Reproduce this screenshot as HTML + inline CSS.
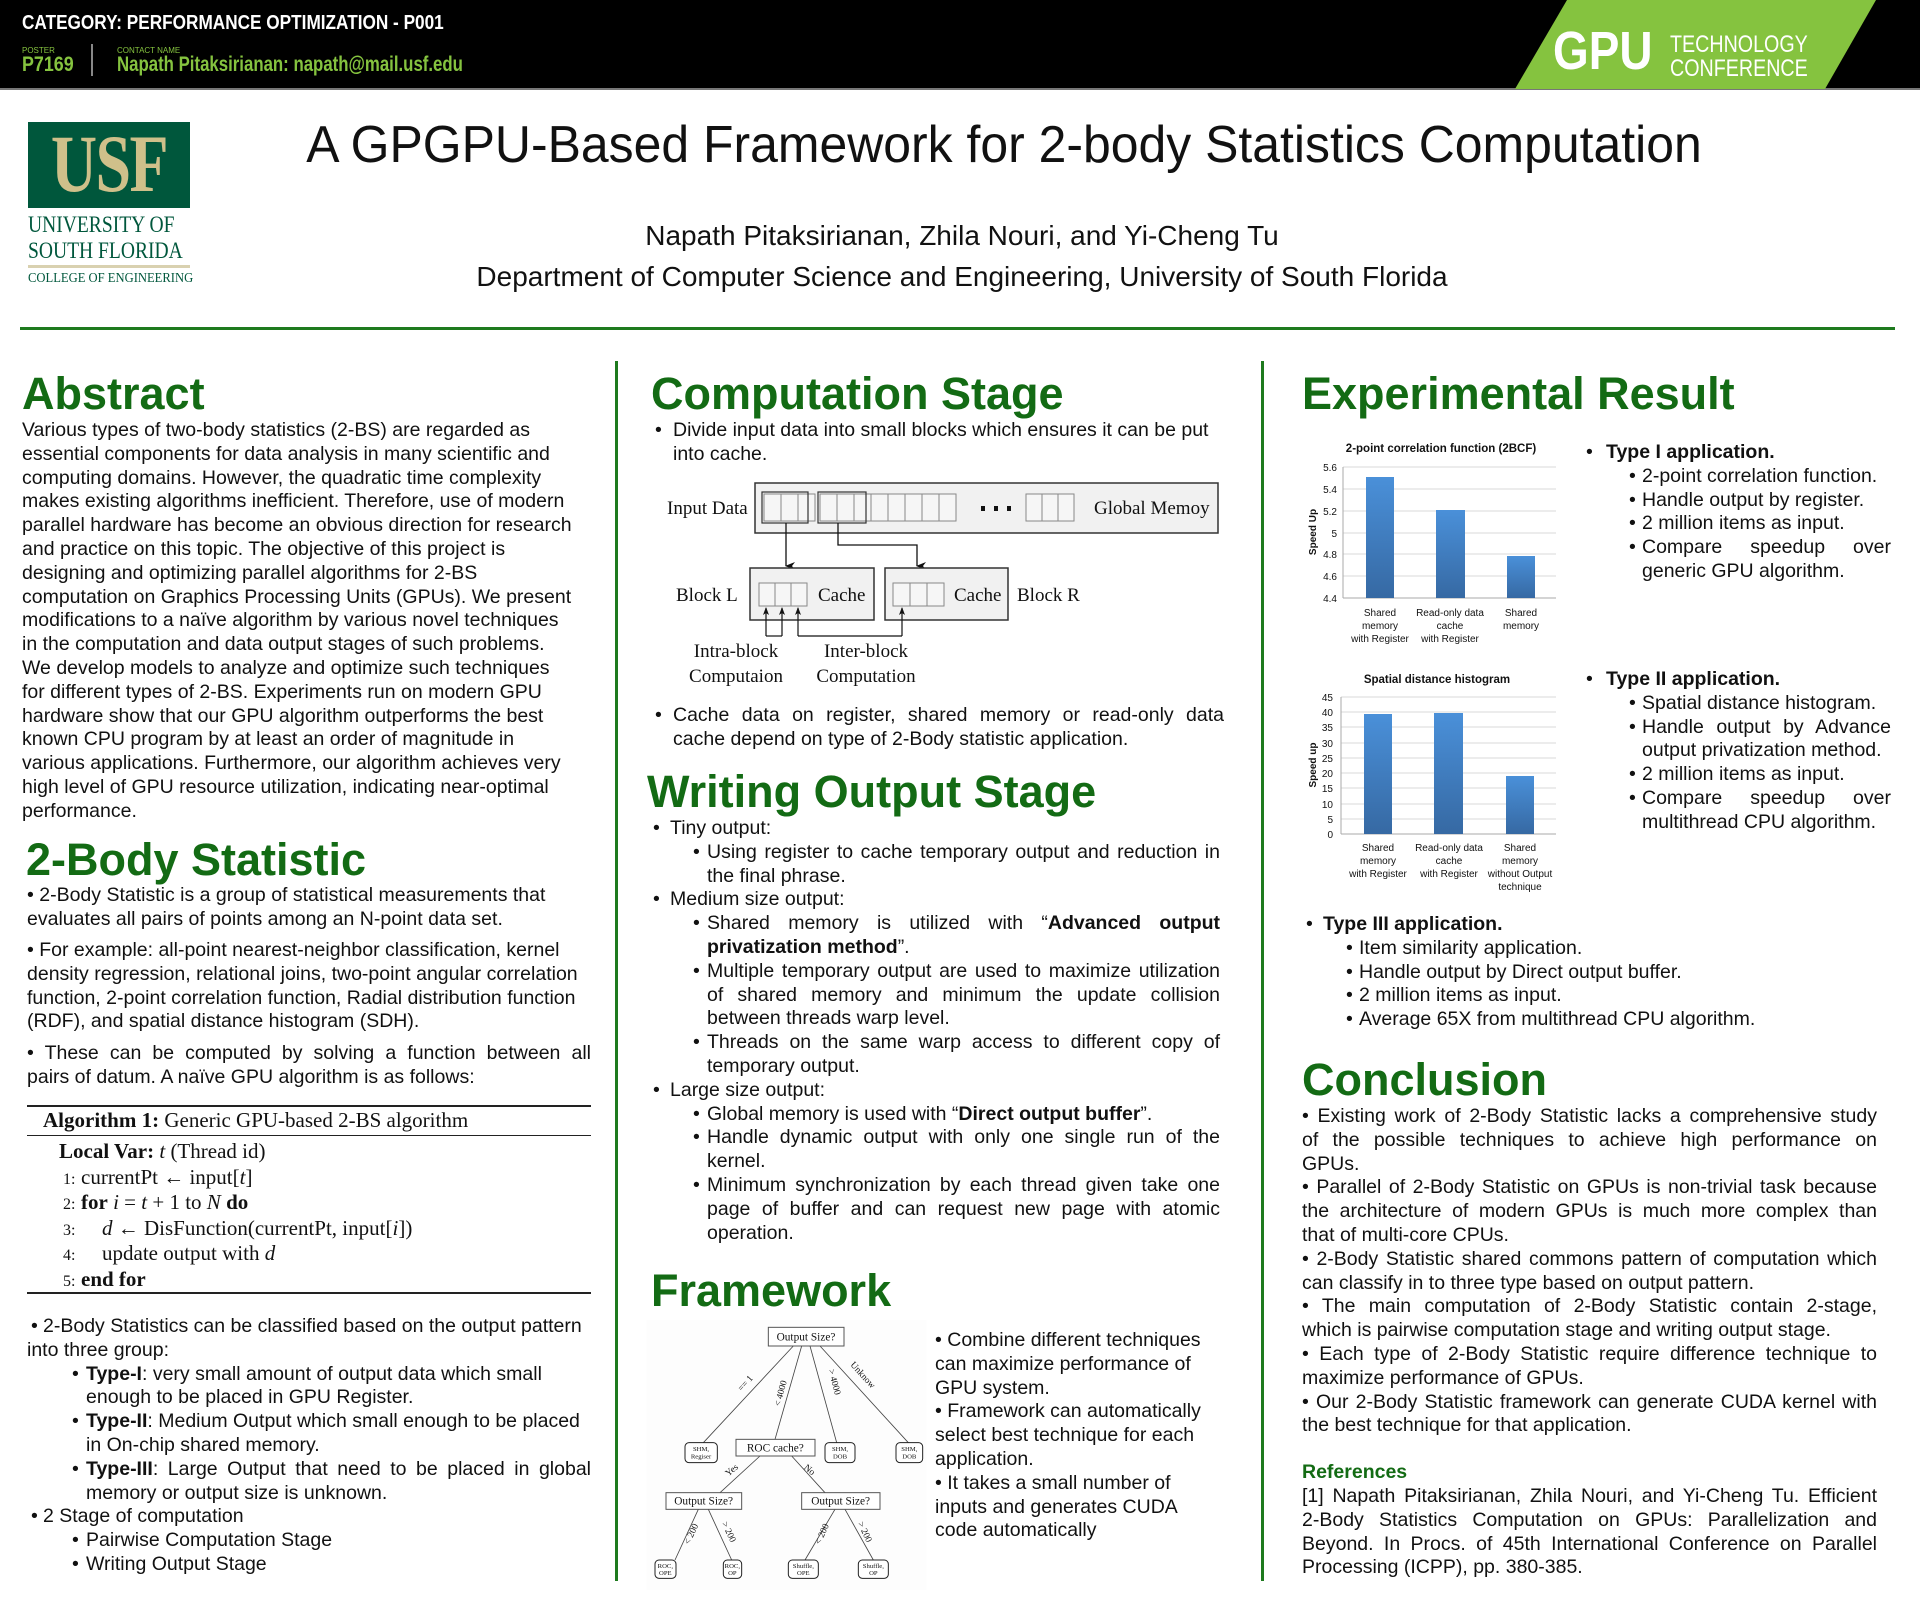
<!DOCTYPE html>
<html><head><meta charset="utf-8">
<style>
*{margin:0;padding:0;box-sizing:border-box}
body{width:1920px;height:1607px;position:relative;background:#fff;font-family:"Liberation Sans",Arial,sans-serif;color:#111;overflow:hidden}
.a{position:absolute}
.h{position:absolute;font-weight:bold;font-size:45px;line-height:52px;color:#136b14;white-space:nowrap}
.t{position:absolute;font-size:19.5px;line-height:23.8px;white-space:nowrap}
.t div{height:23.8px;position:relative}
.j{text-align:justify;text-align-last:justify;white-space:normal}
.b{position:absolute}
.serif{font-family:"Liberation Serif","DejaVu Serif",serif}
.alg div{height:25.6px;line-height:25.6px;white-space:nowrap}
.alg .n{display:inline-block;width:22px;font-size:16px}
</style></head><body>

<!-- header -->
<div class="a" style="left:0;top:0;width:1920px;height:88px;background:#000"></div>
<div class="a" style="left:0;top:88px;width:1920px;height:2px;background:#777"></div>
<svg class="a" style="left:0;top:0" width="1920" height="90"><polygon points="1567,0 1876,0 1825,89 1515,89" fill="#85c33f"/></svg>
<div class="a" style="left:22px;top:12px;font-size:20px;font-weight:bold;color:#fff;transform:scaleX(.86);transform-origin:left;white-space:nowrap">CATEGORY: PERFORMANCE OPTIMIZATION - P001</div>
<div class="a" style="left:22px;top:46px;font-size:8px;color:#85c33f">POSTER</div>
<div class="a" style="left:22px;top:53px;font-size:21px;font-weight:bold;color:#85c33f;transform:scaleX(.85);transform-origin:left">P7169</div>
<div class="a" style="left:91px;top:44px;width:2px;height:32px;background:#888"></div>
<div class="a" style="left:117px;top:46px;font-size:8px;color:#85c33f">CONTACT NAME</div>
<div class="a" style="left:117px;top:53px;font-size:21px;font-weight:bold;color:#85c33f;transform:scaleX(.8);transform-origin:left;white-space:nowrap">Napath Pitaksirianan: napath@mail.usf.edu</div>
<div class="a" style="left:1553px;top:24px;font-size:54px;line-height:54px;font-weight:bold;color:#fff;transform:scaleX(.85);transform-origin:left">GPU</div>
<div class="a" style="left:1670px;top:33px;font-size:24px;line-height:24px;color:#fff;transform:scaleX(.82);transform-origin:left;white-space:nowrap">TECHNOLOGY<br>CONFERENCE</div>

<!-- logo -->
<div class="a" style="left:28px;top:122px;width:162px;height:86px;background:#00573c"></div>
<div class="a serif" style="left:28px;top:118px;width:162px;text-align:center;font-size:82px;line-height:92px;font-weight:bold;color:#cfc08a;transform:scaleX(.78);letter-spacing:-2px">USF</div>
<div class="a serif" style="left:28px;top:212px;font-size:23px;line-height:26px;color:#00573c;transform:scaleX(.85);transform-origin:left;white-space:nowrap">UNIVERSITY OF<br>SOUTH FLORIDA</div>
<div class="a" style="left:28px;top:265px;width:162px;height:3px;background:#d9d1b0"></div>
<div class="a serif" style="left:28px;top:271px;font-size:14px;color:#00573c;transform:scaleX(.9);transform-origin:left;white-space:nowrap">COLLEGE OF ENGINEERING</div>

<!-- title -->
<div class="a" style="left:0;width:2008px;top:115px;text-align:center;font-size:52px;line-height:60px;white-space:nowrap;transform:scaleX(.96)">A GPGPU-Based Framework for 2-body Statistics Computation</div>
<div class="a" style="left:0;width:1924px;top:220px;text-align:center;font-size:28px;line-height:32px">Napath Pitaksirianan, Zhila Nouri, and Yi-Cheng Tu</div>
<div class="a" style="left:0;width:1924px;top:261px;text-align:center;font-size:28px;line-height:32px">Department of Computer Science and Engineering, University of South Florida</div>
<div class="a" style="left:20px;top:327px;width:1875px;height:3px;background:#1e7a1e"></div>
<div class="a" style="left:615px;top:361px;width:3px;height:1220px;background:#1e7a1e"></div>
<div class="a" style="left:1261px;top:361px;width:3px;height:1220px;background:#1e7a1e"></div>

<!-- COLUMN 1 -->
<div class="h" style="left:22px;top:368px">Abstract</div>
<div class="t" style="left:22px;top:419px">Various types of two-body statistics (2-BS) are regarded as<br>essential components for data analysis in many scientific and<br>computing domains. However, the quadratic time complexity<br>makes existing algorithms inefficient. Therefore, use of modern<br>parallel hardware has become an obvious direction for research<br>and practice on this topic. The objective of this project is<br>designing and optimizing parallel algorithms for 2-BS<br>computation on Graphics Processing Units (GPUs). We present<br>modifications to a naïve algorithm by various novel techniques<br>in the computation and data output stages of such problems.<br>We develop models to analyze and optimize such techniques<br>for different types of 2-BS. Experiments run on modern GPU<br>hardware show that our GPU algorithm outperforms the best<br>known CPU program by at least an order of magnitude in<br>various applications. Furthermore, our algorithm achieves very<br>high level of GPU resource utilization, indicating near-optimal<br>performance.</div>

<div class="h" style="left:26px;top:834px">2-Body Statistic</div>
<div class="t" style="left:27px;top:884px">• 2-Body Statistic is a group of statistical measurements that<br>evaluates all pairs of points among an N-point data set.</div>
<div class="t" style="left:27px;top:939px">• For example: all-point nearest-neighbor classification, kernel<br>density regression, relational joins, two-point angular correlation<br>function, 2-point correlation function, Radial distribution function<br>(RDF), and spatial distance histogram (SDH).</div>
<div class="t" style="left:27px;top:1042px;width:564px"><div class="j">• These can be computed by solving a function between all</div><div>pairs of datum. A naïve GPU algorithm is as follows:</div></div>

<!-- algorithm -->
<div class="a" style="left:27px;top:1105px;width:564px;height:2px;background:#222"></div>
<div class="a" style="left:27px;top:1135px;width:564px;height:1px;background:#222"></div>
<div class="a" style="left:27px;top:1292px;width:564px;height:2px;background:#222"></div>
<div class="a serif" style="left:43px;top:1107px;font-size:21px;line-height:27px;white-space:nowrap"><b>Algorithm 1:</b> Generic GPU-based 2-BS algorithm</div>
<div class="a serif alg" style="left:59px;top:1139px;font-size:21px">
<div><b>Local Var:</b> <i>t</i> (Thread id)</div>
<div><span class="n">&nbsp;1:</span>currentPt ← input[<i>t</i>]</div>
<div><span class="n">&nbsp;2:</span><b>for</b> <i>i</i> = <i>t</i> + 1 to <i>N</i> <b>do</b></div>
<div><span class="n">&nbsp;3:</span>&nbsp;&nbsp;&nbsp;&nbsp;<i>d</i> ← DisFunction(currentPt, input[<i>i</i>])</div>
<div><span class="n">&nbsp;4:</span>&nbsp;&nbsp;&nbsp;&nbsp;update output with <i>d</i></div>
<div><span class="n">&nbsp;5:</span><b>end for</b></div>
</div>

<div class="t" style="left:27px;top:1315px;width:564px">
<div><span class="b" style="left:4px">•</span><span style="padding-left:16px">2-Body Statistics can be classified based on the output pattern</span></div>
<div>into three group:</div>
<div><span class="b" style="left:45px">•</span><span style="padding-left:59px"><b>Type-I</b>: very small amount of output data which small</span></div>
<div style="padding-left:59px">enough to be placed in GPU Register.</div>
<div><span class="b" style="left:45px">•</span><span style="padding-left:59px"><b>Type-II</b>: Medium Output which small enough to be placed</span></div>
<div style="padding-left:59px">in On-chip shared memory.</div>
<div><span class="b" style="left:45px">•</span><div class="j" style="margin-left:59px"><b>Type-III</b>: Large Output that need to be placed in global</div></div>
<div style="padding-left:59px">memory or output size is unknown.</div>
<div><span class="b" style="left:4px">•</span><span style="padding-left:16px">2 Stage of computation</span></div>
<div><span class="b" style="left:45px">•</span><span style="padding-left:59px">Pairwise Computation Stage</span></div>
<div><span class="b" style="left:45px">•</span><span style="padding-left:59px">Writing Output Stage</span></div>
</div>

<!-- COLUMN 2 -->
<div class="h" style="left:651px;top:368px">Computation Stage</div>
<div class="t" style="left:651px;top:419px;width:573px">
<div><span class="b" style="left:4px">•</span><span style="padding-left:22px">Divide input data into small blocks which ensures it can be put</span></div>
<div style="padding-left:22px">into cache.</div></div>

<svg class="a serif" style="left:0;top:0" width="1920" height="1607" font-family="Liberation Serif,serif" font-size="19" fill="#111">
<defs><marker id="ar" markerWidth="8" markerHeight="10" refX="4" refY="9" orient="auto-start-reverse" markerUnits="userSpaceOnUse"><path d="M0,0 L4,10 L8,0 L4,3 Z" fill="#111"/></marker>
<marker id="as" markerWidth="6" markerHeight="8" refX="3" refY="1" orient="0" markerUnits="userSpaceOnUse"><path d="M0,8 L3,0 L6,8 L3,6 Z" fill="#111"/></marker></defs>
<text x="667" y="514">Input Data</text>
<rect x="755" y="483" width="463" height="50" fill="#f1f1f1" stroke="#333" stroke-width="1.5"/>
<g fill="#f6f6f6" stroke="#888" stroke-width="1">
<rect x="764" y="494" width="17" height="27"/><rect x="781" y="494" width="17" height="27"/><rect x="798" y="494" width="17" height="27"/>
<rect x="820" y="494" width="17" height="27"/><rect x="837" y="494" width="17" height="27"/><rect x="854" y="494" width="17" height="27"/>
<rect x="871" y="494" width="17" height="27"/><rect x="888" y="494" width="17" height="27"/><rect x="905" y="494" width="17" height="27"/>
<rect x="922" y="494" width="17" height="27"/><rect x="939" y="494" width="17" height="27"/>
<rect x="1026" y="494" width="16" height="27"/><rect x="1042" y="494" width="16" height="27"/><rect x="1058" y="494" width="16" height="27"/>
</g>
<rect x="762" y="492" width="46" height="31" fill="none" stroke="#333" stroke-width="1.2"/>
<rect x="818" y="492" width="48" height="31" fill="none" stroke="#333" stroke-width="1.2"/>
<g fill="#111"><rect x="981" y="506" width="4" height="5"/><rect x="994" y="506" width="4" height="5"/><rect x="1007" y="506" width="4" height="5"/></g>
<text x="1094" y="514">Global Memoy</text>
<g stroke="#111" stroke-width="1.3" fill="none">
<path d="M786,523 V566" marker-end="url(#ar)"/>
<path d="M838,523 V545 H917 V566" marker-end="url(#ar)"/>
</g>
<rect x="750" y="568" width="124" height="52" fill="#f1f1f1" stroke="#333" stroke-width="1.5"/>
<rect x="885" y="568" width="123" height="52" fill="#f1f1f1" stroke="#333" stroke-width="1.5"/>
<g fill="#f6f6f6" stroke="#888"><rect x="759" y="583" width="16" height="23"/><rect x="775" y="583" width="16" height="23"/><rect x="791" y="583" width="16" height="23"/>
<rect x="893" y="583" width="17" height="23"/><rect x="910" y="583" width="17" height="23"/><rect x="927" y="583" width="17" height="23"/></g>
<text x="818" y="601">Cache</text><text x="954" y="601">Cache</text>
<text x="676" y="601">Block L</text><text x="1017" y="601">Block R</text>
<g stroke="#111" stroke-width="1.2" fill="none">
<path d="M766,636 V608" marker-end="url(#as)"/><path d="M782,636 V608" marker-end="url(#as)"/><path d="M766,636 H782"/>
<path d="M798,636 V608" marker-end="url(#as)"/><path d="M902,636 V608" marker-end="url(#as)"/><path d="M798,636 H902"/>
</g>
<g text-anchor="middle"><text x="736" y="657">Intra-block</text><text x="736" y="682">Computaion</text>
<text x="866" y="657">Inter-block</text><text x="866" y="682">Computation</text></g>
</svg>

<div class="t" style="left:651px;top:704px;width:573px">
<div><span class="b" style="left:4px">•</span><div class="j" style="margin-left:22px">Cache data on register, shared memory or read-only data</div></div>
<div style="padding-left:22px">cache depend on type of 2-Body statistic application.</div></div>

<div class="h" style="left:647px;top:766px">Writing Output Stage</div>
<div class="t" style="left:651px;top:817px;width:569px">
<div><span class="b" style="left:2px">•</span><span style="padding-left:19px">Tiny output:</span></div>
<div><span class="b" style="left:42px">•</span><div class="j" style="margin-left:56px">Using register to cache temporary output and reduction in</div></div>
<div style="padding-left:56px">the final phrase.</div>
<div><span class="b" style="left:2px">•</span><span style="padding-left:19px">Medium size output:</span></div>
<div><span class="b" style="left:42px">•</span><div class="j" style="margin-left:56px">Shared memory is utilized with “<b>Advanced output</b></div></div>
<div style="padding-left:56px"><b>privatization method</b>”.</div>
<div><span class="b" style="left:42px">•</span><div class="j" style="margin-left:56px">Multiple temporary output are used to maximize utilization</div></div>
<div class="j" style="margin-left:56px">of shared memory and minimum the update collision</div>
<div style="padding-left:56px">between threads warp level.</div>
<div><span class="b" style="left:42px">•</span><div class="j" style="margin-left:56px">Threads on the same warp access to different copy of</div></div>
<div style="padding-left:56px">temporary output.</div>
<div><span class="b" style="left:2px">•</span><span style="padding-left:19px">Large size output:</span></div>
<div><span class="b" style="left:42px">•</span><span style="padding-left:56px">Global memory is used with “<b>Direct output buffer</b>”.</span></div>
<div><span class="b" style="left:42px">•</span><div class="j" style="margin-left:56px">Handle dynamic output with only one single run of the</div></div>
<div style="padding-left:56px">kernel.</div>
<div><span class="b" style="left:42px">•</span><div class="j" style="margin-left:56px">Minimum synchronization by each thread given take one</div></div>
<div class="j" style="margin-left:56px">page of buffer and can request new page with atomic</div>
<div style="padding-left:56px">operation.</div>
</div>

<div class="h" style="left:651px;top:1265px">Framework</div>
<svg class="a" style="left:640px;top:1310px" width="300" height="297" viewBox="0 0 900 891" font-family="Liberation Serif,serif" fill="#111">
<rect x="20" y="30" width="840" height="810" fill="#fdfdfd"/>
<g stroke="#444" stroke-width="2.5" fill="none">
<path d="M460,108 L190,398"/><path d="M485,108 L405,388"/><path d="M510,108 L590,398"/><path d="M540,108 L805,398"/>
<path d="M360,438 L240,548"/><path d="M455,438 L555,548"/>
<path d="M175,598 L105,750"/><path d="M205,598 L275,750"/><path d="M585,598 L495,750"/><path d="M615,598 L700,750"/>
</g>
<g fill="#fff" stroke="#555" stroke-width="3">
<rect x="385" y="52" width="227" height="56"/><rect x="288" y="388" width="237" height="50"/>
<rect x="78" y="548" width="227" height="50"/><rect x="485" y="548" width="235" height="50"/>
</g>
<g fill="#fff" stroke="#222" stroke-width="3">
<rect x="135" y="398" width="97" height="60" rx="12"/><rect x="555" y="398" width="90" height="60" rx="12"/><rect x="768" y="398" width="80" height="60" rx="12"/>
<rect x="45" y="750" width="63" height="55" rx="12"/><rect x="250" y="750" width="55" height="55" rx="12"/>
<rect x="445" y="750" width="90" height="55" rx="12"/><rect x="655" y="750" width="90" height="55" rx="12"/>
</g>
<g text-anchor="middle" font-size="34">
<text x="498" y="92">Output Size?</text><text x="406" y="424">ROC cache?</text>
<text x="191" y="584">Output Size?</text><text x="602" y="584">Output Size?</text>
</g>
<g text-anchor="middle" font-size="20">
<text x="183" y="423">SHM,</text><text x="183" y="446">Regiser</text>
<text x="600" y="423">SHM,</text><text x="600" y="446">DOB</text>
<text x="808" y="423">SHM,</text><text x="808" y="446">DOB</text>
<text x="76" y="774">ROC,</text><text x="76" y="795">OPE</text>
<text x="277" y="774">ROC,</text><text x="277" y="795">OP</text>
<text x="490" y="774">Shuffle,</text><text x="490" y="795">OPE</text>
<text x="700" y="774">Shuffle,</text><text x="700" y="795">OP</text>
</g>
<g font-size="28">
<text transform="translate(305,245) rotate(-48)">== 1</text>
<text transform="translate(420,290) rotate(-75)">&lt; 4000</text>
<text transform="translate(565,180) rotate(75)">&gt; 4000</text>
<text transform="translate(630,165) rotate(48)">Unknow</text>
<text transform="translate(265,500) rotate(-40)">Yes</text>
<text transform="translate(490,475) rotate(40)">No</text>
<text transform="translate(148,705) rotate(-65)">&lt; 200</text>
<text transform="translate(245,640) rotate(65)">&gt; 200</text>
<text transform="translate(540,705) rotate(-65)">&lt; 200</text>
<text transform="translate(653,640) rotate(65)">&gt; 200</text>
</g>
</svg>
<div class="t" style="left:935px;top:1329px">• Combine different techniques<br>can maximize performance of<br>GPU system.<br>• Framework can automatically<br>select best technique for each<br>application.<br>• It takes a small number of<br>inputs and generates CUDA<br>code automatically</div>

<!-- COLUMN 3 -->
<div class="h" style="left:1302px;top:368px">Experimental Result</div>
<svg class="a" style="left:0;top:0" width="1920" height="1607" font-family="Liberation Sans,sans-serif" fill="#111">
<defs><linearGradient id="bg" x1="0" y1="0" x2="0" y2="1"><stop offset="0" stop-color="#4a90d9"/><stop offset="1" stop-color="#3669a3"/></linearGradient></defs>
<text x="1441" y="452" font-size="11.5" font-weight="bold" text-anchor="middle">2-point correlation function (2BCF)</text>
<g stroke="#d8d8d8" stroke-width="1"><path d="M1343,467H1556M1343,489H1556M1343,511H1556M1343,533H1556M1343,554H1556M1343,576H1556M1343,598H1556"/></g>
<path d="M1343,467V598M1343,598H1556" stroke="#aaa"/>
<g font-size="10" text-anchor="end"><text x="1337" y="471">5.6</text><text x="1337" y="493">5.4</text><text x="1337" y="515">5.2</text><text x="1337" y="537">5</text><text x="1337" y="558">4.8</text><text x="1337" y="580">4.6</text><text x="1337" y="602">4.4</text></g>
<rect x="1366" y="477" width="28" height="121" fill="url(#bg)"/><rect x="1436" y="510" width="29" height="88" fill="url(#bg)"/><rect x="1507" y="556" width="28" height="42" fill="url(#bg)"/>
<text transform="translate(1316,532) rotate(-90)" font-size="10" font-weight="bold" text-anchor="middle">Speed Up</text>
<g font-size="10" text-anchor="middle"><text x="1380" y="616">Shared</text><text x="1380" y="629">memory</text><text x="1380" y="642">with Register</text>
<text x="1450" y="616">Read-only data</text><text x="1450" y="629">cache</text><text x="1450" y="642">with Register</text>
<text x="1521" y="616">Shared</text><text x="1521" y="629">memory</text></g>

<text x="1437" y="683" font-size="11.5" font-weight="bold" text-anchor="middle">Spatial distance histogram</text>
<g stroke="#d8d8d8"><path d="M1341,697H1556M1341,712H1556M1341,727H1556M1341,743H1556M1341,758H1556M1341,773H1556M1341,788H1556M1341,804H1556M1341,819H1556"/></g>
<path d="M1341,697V834M1341,834H1556" stroke="#aaa"/>
<g font-size="10" text-anchor="end"><text x="1333" y="701">45</text><text x="1333" y="716">40</text><text x="1333" y="731">35</text><text x="1333" y="747">30</text><text x="1333" y="762">25</text><text x="1333" y="777">20</text><text x="1333" y="792">15</text><text x="1333" y="808">10</text><text x="1333" y="823">5</text><text x="1333" y="838">0</text></g>
<rect x="1364" y="714" width="28" height="120" fill="url(#bg)"/><rect x="1434" y="713" width="29" height="121" fill="url(#bg)"/><rect x="1506" y="776" width="28" height="58" fill="url(#bg)"/>
<text transform="translate(1316,765) rotate(-90)" font-size="10" font-weight="bold" text-anchor="middle">Speed up</text>
<g font-size="10" text-anchor="middle"><text x="1378" y="851">Shared</text><text x="1378" y="864">memory</text><text x="1378" y="877">with Register</text>
<text x="1449" y="851">Read-only data</text><text x="1449" y="864">cache</text><text x="1449" y="877">with Register</text>
<text x="1520" y="851">Shared</text><text x="1520" y="864">memory</text><text x="1520" y="877">without Output</text><text x="1520" y="890">technique</text></g>
</svg>

<div class="t" style="left:1586px;top:441px;width:305px">
<div><span class="b" style="left:0">•</span><b style="padding-left:20px">Type I application.</b></div>
<div><span class="b" style="left:43px">•</span><span style="padding-left:56px">2-point correlation function.</span></div>
<div><span class="b" style="left:43px">•</span><span style="padding-left:56px">Handle output by register.</span></div>
<div><span class="b" style="left:43px">•</span><span style="padding-left:56px">2 million items as input.</span></div>
<div><span class="b" style="left:43px">•</span><div class="j" style="margin-left:56px">Compare speedup over</div></div>
<div style="padding-left:56px">generic GPU algorithm.</div>
</div>
<div class="t" style="left:1586px;top:668px;width:305px">
<div><span class="b" style="left:0">•</span><b style="padding-left:20px">Type II application.</b></div>
<div><span class="b" style="left:43px">•</span><span style="padding-left:56px">Spatial distance histogram.</span></div>
<div><span class="b" style="left:43px">•</span><div class="j" style="margin-left:56px">Handle output by Advance</div></div>
<div style="padding-left:56px">output privatization method.</div>
<div><span class="b" style="left:43px">•</span><span style="padding-left:56px">2 million items as input.</span></div>
<div><span class="b" style="left:43px">•</span><div class="j" style="margin-left:56px">Compare speedup over</div></div>
<div style="padding-left:56px">multithread CPU algorithm.</div>
</div>
<div class="t" style="left:1306px;top:913px">
<div><span class="b" style="left:0">•</span><b style="padding-left:17px">Type III application.</b></div>
<div><span class="b" style="left:40px">•</span><span style="padding-left:53px">Item similarity application.</span></div>
<div><span class="b" style="left:40px">•</span><span style="padding-left:53px">Handle output by Direct output buffer.</span></div>
<div><span class="b" style="left:40px">•</span><span style="padding-left:53px">2 million items as input.</span></div>
<div><span class="b" style="left:40px">•</span><span style="padding-left:53px">Average 65X from multithread CPU algorithm.</span></div>
</div>

<div class="h" style="left:1302px;top:1054px">Conclusion</div>
<div class="t" style="left:1302px;top:1105px;width:575px">
<div class="j">• Existing work of 2-Body Statistic lacks a comprehensive study</div>
<div class="j">of the possible techniques to achieve high performance on</div>
<div>GPUs.</div>
<div class="j">• Parallel of 2-Body Statistic on GPUs is non-trivial task because</div>
<div class="j">the architecture of modern GPUs is much more complex than</div>
<div>that of multi-core CPUs.</div>
<div class="j">• 2-Body Statistic shared commons pattern of computation which</div>
<div>can classify in to three type based on output pattern.</div>
<div class="j">• The main computation of 2-Body Statistic contain 2-stage,</div>
<div>which is pairwise computation stage and writing output stage.</div>
<div class="j">• Each type of 2-Body Statistic require difference technique to</div>
<div>maximize performance of GPUs.</div>
<div class="j">• Our 2-Body Statistic framework can generate CUDA kernel with</div>
<div>the best technique for that application.</div>
</div>
<div class="a" style="left:1302px;top:1461px;font-size:19.5px;line-height:23.8px;font-weight:bold;color:#136b14">References</div>
<div class="t" style="left:1302px;top:1485px;width:575px">
<div class="j">[1] Napath Pitaksirianan, Zhila Nouri, and Yi-Cheng Tu. Efficient</div>
<div class="j">2-Body Statistics Computation on GPUs: Parallelization and</div>
<div class="j">Beyond. In Procs. of 45th International Conference on Parallel</div>
<div>Processing (ICPP), pp. 380-385.</div>
</div>
</body></html>
